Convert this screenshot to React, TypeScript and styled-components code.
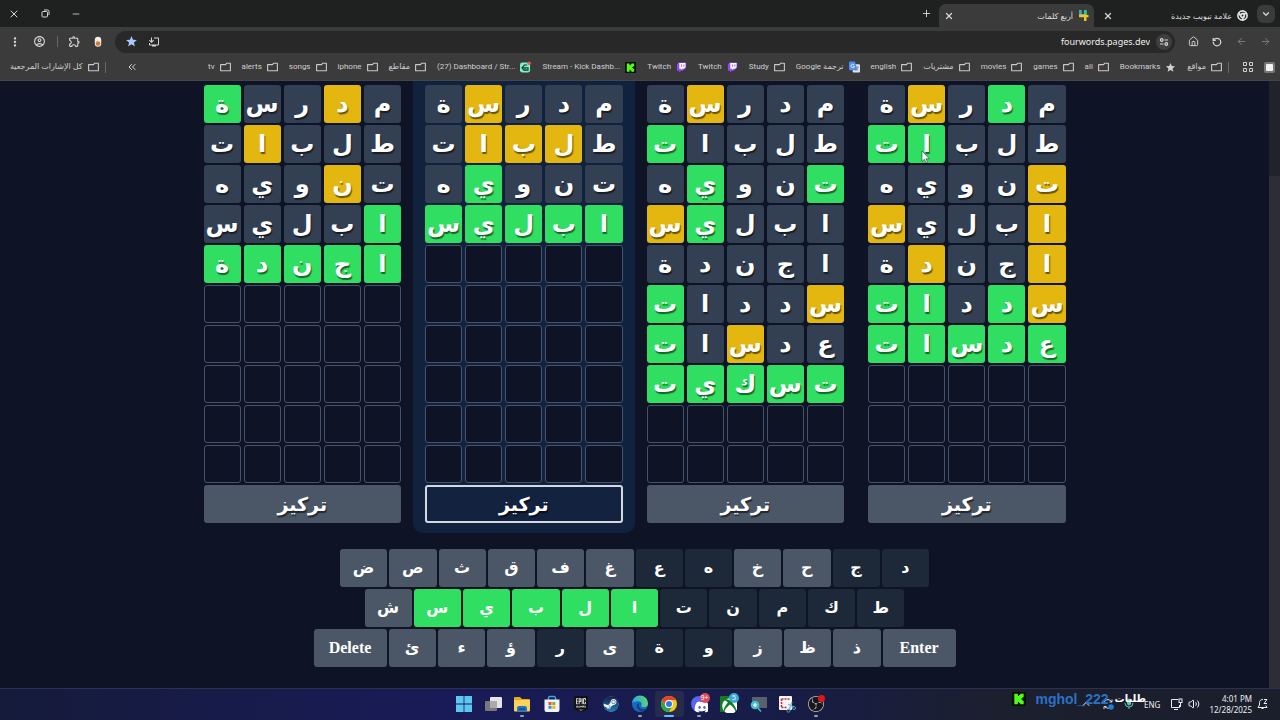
import React from 'react';
import styled, { createGlobalStyle } from 'styled-components';
import {
  ArrowLeft,
  ArrowRight,
  ChevronDown,
  ChevronsLeft,
  ChevronUp,
  House,
  Minus,
  Plus,
  RotateCcw,
  Volume2,
  X,
} from 'lucide-react';
import { FaDiscord, FaSteam, FaXbox } from 'react-icons/fa';
import {
  MdInstallDesktop,
  MdMoreVert,
  MdOutlineAccountCircle,
  MdOutlineExtension,
  MdStar,
} from 'react-icons/md';
import { SiEpicgames, SiObsstudio } from 'react-icons/si';

const UI_FONT = '"Noto Sans", "DejaVu Sans", sans-serif';
const SMALL_FONT = 'Roboto, "DejaVu Sans", sans-serif';
const GAME_FONT = '"DejaVu Sans", sans-serif';

const GlobalStyle = createGlobalStyle`
  *, *::before, *::after { box-sizing: border-box; }
  body {
    margin: 0;
    background: #0e1425;
    color: #fff;
    font-family: ${UI_FONT};
  }
  button, input { font: inherit; color: inherit; margin: 0; padding: 0; border: 0; background: none; }
  button { cursor: pointer; }
  a { color: inherit; text-decoration: none; }
  svg { display: block; flex: none; }
`;

const Screen = styled.div`
  display: flex;
  flex-direction: column;
  min-height: 100vh;
`;

/* ---------- browser window ---------- */

const Browser = styled.header`
  direction: rtl;
  background: #3b3b3b;
  border-bottom: 1px solid #42464a;
`;

const TabStrip = styled.div`
  display: flex;
  align-items: center;
  gap: 4px;
  height: 27px;
  padding: 0 5px;
  background: #1f2120;
  color: #dedede;
`;

const IconButton = styled.button<{ $size?: number; $bg?: string; $dim?: boolean }>`
  display: flex;
  align-items: center;
  justify-content: center;
  flex: none;
  width: ${(p) => p.$size ?? 18}px;
  height: 18px;
  border-radius: 6px;
  background: ${(p) => p.$bg ?? 'transparent'};
  color: ${(p) => (p.$dim ? '#808080' : '#d6d6d6')};
`;

const Tab = styled.div<{ $active?: boolean }>`
  display: flex;
  align-items: center;
  gap: 5px;
  flex: 0 1 155px;
  height: 23px;
  align-self: flex-end;
  padding: 0 5px;
  border-radius: 7px 7px 0 0;
  background: ${(p) => (p.$active ? '#3b3b3b' : 'transparent')};
`;

const TabTitle = styled.span`
  flex: 1;
  overflow: hidden;
  white-space: nowrap;
  font-size: 8px;
`;

const Spacer = styled.div`
  flex: 1;
`;

const WindowControls = styled.div`
  display: flex;
  gap: 13px;
`;

const Toolbar = styled.div`
  display: flex;
  align-items: center;
  gap: 6px;
  height: 29px;
  padding: 0 6px;
`;

const Omnibox = styled.div`
  display: flex;
  align-items: center;
  gap: 6px;
  flex: 1;
  height: 22px;
  margin-right: 3px;
  padding: 0 3px 0 7px;
  border-radius: 11px;
  background: #282828;
`;

const SiteInfo = styled.button`
  display: flex;
  align-items: center;
  justify-content: center;
  width: 16px;
  height: 16px;
  border-radius: 50%;
  background: #3f3f3f;
  color: #d6d6d6;
`;

const Address = styled.input`
  flex: 1;
  min-width: 0;
  height: 20px;
  direction: ltr;
  text-align: right;
  font-size: 9px;
  color: #f0f0f0;
  outline: none;
`;

const Mirrored = styled.span`
  transform: scaleX(-1);
`;

const Divider = styled.span`
  flex: none;
  width: 1px;
  height: 11px;
  margin: 0 3px;
  background: #66696b;
`;

const Bookmarks = styled.nav`
  display: flex;
  align-items: center;
  gap: 11px;
  height: 24px;
  padding: 0 5px 2px 10px;
  font-family: ${SMALL_FONT};
  font-size: 8px;
  color: #cfcfcf;
`;

const MarkGroup = styled.div`
  display: flex;
  align-items: center;
  gap: 3px;
`;

const Bookmark = styled.a`
  display: flex;
  align-items: center;
  gap: 5px;
  flex: none;
  line-height: 14px;
  white-space: nowrap;
`;

const FolderIcon = () => (
  <svg width="11" height="12" viewBox="0 0 11 12" fill="none" stroke="#c9c9c9" strokeWidth="1.1" aria-hidden="true">
    <path d="M.6 3.600h4.900l1.200-1.400h3.700v7.600H.6z" strokeLinejoin="round" />
  </svg>
);

const TwitchIcon = () => (
  <svg width="11" height="12" viewBox="0 0 12 12" aria-hidden="true">
    <path d="M2.600 1 1 3.200V10h2.400v2l2-2h2L11 6.800V1z" fill="#9146ff" />
    <path d="M3.600 1.600h6.800v4.800L8.800 8H7L5.400 9.400V8H3.600z" fill="#fff" />
    <path d="M6.200 3.200v2.400M8.600 3.200v2.400" stroke="#9146ff" />
  </svg>
);

const KickIcon = ({ size = 11 }: { size?: number }) => (
  <svg width={size} height={size} viewBox="0 0 12 12" aria-hidden="true">
    <path d="M0 0h12v12H0z" fill="#071107" />
    <path d="M2 1.500h3v2h1v-1h1v-1h3v3H9v1H8v1h1v1h1v3H7v-1H6v-1H5v2H2z" fill="#53fc18" />
  </svg>
);

const StreamIcon = () => (
  <svg width="11" height="12" viewBox="0 0 12 12" aria-hidden="true">
    <rect y="1" width="11" height="11" rx="2.500" fill="#7df0cb" />
    <path d="M2.300 6.800h6.400v2.600H4.200zM2.500 6.600l2.300-2.800h3" fill="none" stroke="#12372f" strokeWidth="1.300" />
    <path d="M4.500 8.100h2.500" stroke="#12372f" />
    <circle cx="10" cy="2" r="1.900" fill="#ef5360" />
  </svg>
);

const TranslateIcon = () => (
  <svg width="11" height="12" viewBox="0 0 12 12" aria-hidden="true">
    <rect x="4" y="3" width="8" height="9" rx="1" fill="#dfe4ea" />
    <path d="M6.500 6h4M8.500 5v1M10 6c-.5 2-1.500 3-3 3.800M7.500 7.500l2.500 2.300" stroke="#6e7b8c" strokeWidth=".8" fill="none" />
    <path d="M1 0h5.500L9 9.500H1a1 1 0 0 1-1-1V1a1 1 0 0 1 1-1z" fill="#4c8bf5" />
    <path d="M5.600 3.700A1.900 1.900 0 1 0 6 5.200H4.200" stroke="#fff" strokeWidth=".9" fill="none" />
  </svg>
);

const FourIcon = () => (
  <svg width="11" height="11" viewBox="0 0 11 11" aria-hidden="true">
    <path d="M1 0h2.500v4H6V0h2.500v5H1z" fill="#2fc98b" />
    <path d="M1 0h2.500v5H1z" fill="#3aa9c8" />
    <path d="M1 4.500h5V3h2.500v2H10.500v2.300H8.500V11H6V7.300H1z" fill="#f2c22c" />
    <path d="M6 0h2.500v4.500H6z" fill="#2fc98b" />
  </svg>
);

const ChromeMono = () => (
  <svg width="11" height="11" viewBox="0 0 12 12" fill="none" stroke="#e2e2e2" strokeWidth="1.800" aria-hidden="true">
    <circle cx="6" cy="6" r="5" />
    <circle cx="6" cy="6" r="2" />
    <path d="M6 4h4.800M4.300 7 1.800 3M7.700 7l-2.400 4" />
  </svg>
);

const TuneIcon = () => (
  <svg width="10" height="10" viewBox="0 0 10 10" fill="none" stroke="currentColor" strokeWidth="1.200" aria-hidden="true">
    <circle cx="2.700" cy="3" r="1.300" />
    <path d="M5.500 3H9M1 7h3.500" />
    <circle cx="7.300" cy="7" r="1.300" />
  </svg>
);

const RestoreIcon = () => (
  <svg width="9" height="9" viewBox="0 0 9 9" fill="none" stroke="currentColor" aria-hidden="true">
    <rect x="1" y="2.500" width="5.500" height="5.500" rx="1" />
    <path d="M3 1h3.500A1.500 1.500 0 0 1 8 2.500V6" />
  </svg>
);

const EggIcon = () => (
  <svg width="8" height="12" viewBox="0 0 8 12" aria-hidden="true">
    <rect x=".8" y=".8" width="6.400" height="10" rx="3.200" fill="#f3ede6" />
    <circle cx="4" cy="7.600" r="2.300" fill="#d9772f" />
  </svg>
);

const AppsIcon = () => (
  <svg width="10" height="10" viewBox="0 0 10 10" fill="none" stroke="#d0d0d0" aria-hidden="true">
    <path d="M.5.5h3v3h-3zM6.500.5h3v3h-3zM.5 6.500h3v3h-3zM6.500 6.500h3v3h-3z" />
  </svg>
);

const SquareIcon = () => (
  <svg width="11" height="11" viewBox="0 0 11 11" aria-hidden="true">
    <rect width="11" height="11" rx="2" fill="#777" />
    <rect x="2" y="2" width="7" height="7" rx="1" fill="#f2f2f2" />
  </svg>
);

type Mark = { label: string; icon?: 'twitch' | 'kick' | 'stream' | 'translate' | 'star' };

const MARKS: Mark[] = [
  { label: 'Bookmarks', icon: 'star' },
  { label: 'ali' },
  { label: 'games' },
  { label: 'movies' },
  { label: 'مشتريات' },
  { label: 'english' },
  { label: 'ترجمة Google', icon: 'translate' },
  { label: 'Study' },
  { label: 'Twitch', icon: 'twitch' },
  { label: 'Twitch', icon: 'twitch' },
  { label: 'Stream - Kick Dashb...', icon: 'kick' },
  { label: '(27) Dashboard / Str...', icon: 'stream' },
  { label: 'مقاطع' },
  { label: 'iphone' },
  { label: 'songs' },
  { label: 'alerts' },
  { label: 'tv' },
];

const MarkIcon = ({ kind }: { kind?: Mark['icon'] }) => {
  switch (kind) {
    case 'twitch':
      return <TwitchIcon />;
    case 'kick':
      return <KickIcon />;
    case 'stream':
      return <StreamIcon />;
    case 'translate':
      return <TranslateIcon />;
    case 'star':
      return <MdStar size={11} color="#d0d0d0" />;
    default:
      return <FolderIcon />;
  }
};

/* ---------- game ---------- */

const Viewport = styled.div`
  display: flex;
  flex: 1;
`;

const Scrollbar = styled.div`
  width: 11px;
  padding-top: 95px;
  background: #20232b;
`;

const Thumb = styled.div`
  height: 100%;
  background: #2c2d37;
`;

const Game = styled.main`
  flex: 1;
  min-width: 0;
  padding-bottom: 20px;
  font-family: ${GAME_FONT};
  font-weight: 700;
`;

const Boards = styled.div`
  display: grid;
  grid-template-columns: repeat(4, minmax(0, 1fr));
  max-width: 886px;
  margin: 0 auto;
`;

const Board = styled.section<{ $focused: boolean }>`
  display: grid;
  gap: 2px;
  padding: 4px 12px 10px;
  border-radius: 0 0 10px 10px;
  background: ${(p) => (p.$focused ? '#10223e' : 'transparent')};
`;

const Row = styled.div`
  display: grid;
  grid-template-columns: repeat(5, minmax(0, 1fr));
  gap: 3px;
  direction: rtl;
`;

const CELL_COLORS: Record<string, string> = { x: '#334053', g: '#30df61', y: '#e3b710', e: '#0e1425' };

const LETTER_SHADOW = '1px 2px 1px rgba(0, 0, 0, 0.55)';

const Cell = styled.div<{ $state: string }>`
  display: flex;
  align-items: center;
  justify-content: center;
  height: 38px;
  border: 1px solid ${(p) => (p.$state === 'e' ? '#465269' : 'transparent')};
  border-radius: 3px;
  background: ${(p) => CELL_COLORS[p.$state]};
  font-size: 24px;
  line-height: 32px;
  text-shadow: ${LETTER_SHADOW};
`;

const FocusButton = styled.button<{ $focused: boolean }>`
  height: 38px;
  border-radius: 3px;
  border: 2px solid ${(p) => (p.$focused ? '#d3d8e4' : '#4b5767')};
  background: ${(p) => (p.$focused ? '#12223f' : '#4b5767')};
  font-size: 19px;
  line-height: 28px;
  text-shadow: ${LETTER_SHADOW};
`;

const Keyboard = styled.div`
  display: grid;
  gap: 2px;
  justify-items: center;
  margin-top: 16px;
`;

const KeyRow = styled.div<{ $max: number }>`
  display: flex;
  gap: 2px;
  width: 100%;
  max-width: ${(p) => p.$max}px;
`;

const KEY_COLORS: Record<string, string> = { n: '#4b5767', g: '#30df61', d: '#1d2938' };

const Key = styled.button<{ $state: string; $wide?: boolean }>`
  flex: ${(p) => (p.$wide ? '0 0 73px' : '1 1 0')};
  min-width: 0;
  height: 38px;
  border-radius: 3px;
  background: ${(p) => KEY_COLORS[p.$state]};
  font-family: ${(p) => (p.$wide ? '"Liberation Serif", serif' : GAME_FONT)};
  font-size: 16px;
  font-weight: 700;
  line-height: 20px;
`;

const BOARDS = [
  {
    words: ['مدرسة', 'طلبات', 'تنويه', 'ابليس', 'اجندة'],
    marks: ['xyxxg', 'xxxyx', 'xyxxx', 'gxxxx', 'ggggg'],
  },
  {
    words: ['مدرسة', 'طلبات', 'تنويه', 'ابليس'],
    marks: ['xxxyx', 'xyyyx', 'xxxgx', 'ggggg'],
    focused: true,
  },
  {
    words: ['مدرسة', 'طلبات', 'تنويه', 'ابليس', 'اجندة', 'سددات', 'عدسات', 'تسكيت'],
    marks: ['xxxyx', 'xxxxg', 'gxxgx', 'xxxgy', 'xxxxx', 'yxxxg', 'xxyxg', 'ggggg'],
  },
  {
    words: ['مدرسة', 'طلبات', 'تنويه', 'ابليس', 'اجندة', 'سددات', 'عدسات'],
    marks: ['xgxyx', 'xxxgg', 'yxxxx', 'yxxxy', 'yxxyx', 'ygxgg', 'ggggg'],
  },
];

const ROW_COUNT = 10;

const KEY_ROWS = [
  { max: 589, keys: ['ض', 'ص', 'ث', 'ق', 'ف', 'غ', 'ع', 'ه', 'خ', 'ح', 'ج', 'د'], states: 'nnnnnnddnndd' },
  { max: 540, keys: ['ش', 'س', 'ي', 'ب', 'ل', 'ا', 'ت', 'ن', 'م', 'ك', 'ط'], states: 'ngggggddddd' },
  { max: 642, keys: ['Delete', 'ئ', 'ء', 'ؤ', 'ر', 'ى', 'ة', 'و', 'ز', 'ظ', 'ذ', 'Enter'], states: 'nnnndnddnnnn' },
];

const Pointer = styled.svg`
  position: absolute;
  left: 921px;
  top: 151px;
`;

/* ---------- taskbar ---------- */

const Taskbar = styled.footer`
  position: relative;
  display: grid;
  grid-template-columns: 1fr minmax(0, 382px) 1fr;
  align-items: center;
  height: 32px;
  padding-bottom: 1px;
  border-top: 1px solid #2b3150;
  background: linear-gradient(90deg, #151b3a 0%, #191b58 35%, #171c48 60%, #1b1f2e 78%, #1b1e2b 100%);
`;

const Apps = styled.div`
  grid-column: 2;
  display: flex;
`;

const AppButton = styled.button<{ $active?: boolean }>`
  position: relative;
  display: flex;
  flex: 1;
  align-items: center;
  justify-content: center;
  height: 26px;
  border-radius: 3px;
  background: ${(p) => (p.$active ? '#262a4c' : 'transparent')};
`;

const Running = styled.span<{ $active?: boolean }>`
  position: absolute;
  bottom: 0;
  width: ${(p) => (p.$active ? 10 : 4)}px;
  height: 2px;
  border-radius: 1px;
  background: ${(p) => (p.$active ? '#62c4ef' : '#9aa0b8')};
`;

const Badge = styled.span<{ $bg: string }>`
  position: absolute;
  top: 2px;
  right: 4px;
  min-width: 10px;
  height: 10px;
  border-radius: 5px;
  background: ${(p) => p.$bg};
  color: #fff;
  font-size: 7px;
  line-height: 10px;
  text-align: center;
`;

const Tray = styled.div`
  display: flex;
  align-items: center;
  justify-content: flex-end;
  gap: 5px;
  padding-right: 12px;
  font-size: 8px;
  color: #eceef2;
`;

const TrayGroup = styled.div`
  display: flex;
  align-items: center;
  gap: 10px;
  margin-right: 5px;
`;

const Clock = styled.time`
  margin-left: 4px;
  text-align: right;
  line-height: 11px;
`;

const StreamTag = styled.div`
  position: absolute;
  top: 1px;
  right: 134px;
  display: flex;
  align-items: center;
  gap: 6px;
  font-family: "Liberation Sans", "DejaVu Sans", sans-serif;
  font-size: 14px;
  font-weight: 700;
  line-height: 18px;
  white-space: nowrap;
`;

const TagName = styled.span`
  margin-left: 3px;
  color: #2a71c6;
`;

const TagText = styled.span`
  font-size: 10px;
  line-height: 12px;
`;

const WindowsLogo = () => (
  <svg width="18" height="18" viewBox="0 0 18 18" aria-hidden="true">
    <path d="M1 1h7.600v7.600H1zM9.400 1H17v7.600H9.400zM1 9.400h7.600V17H1zM9.400 9.400H17V17H9.400z" fill="#5cc8f2" />
  </svg>
);

const TaskViewIcon = () => (
  <svg width="18" height="18" viewBox="0 0 18 18" aria-hidden="true">
    <rect x="6" y="2" width="12" height="11" rx="1" fill="#e4e4e6" />
    <rect x="1" y="6" width="12" height="10" rx="1" fill="#77777c" />
    <path d="M6 6h7v7H6z" fill="#aaaaae" />
  </svg>
);

const ExplorerIcon = () => (
  <svg width="18" height="18" viewBox="0 0 18 18" aria-hidden="true">
    <path d="M1 3a1 1 0 0 1 1-1h5l2 2h7a1 1 0 0 1 1 1v3H1z" fill="#e8a81c" />
    <rect x="1" y="5" width="16" height="11.500" rx="1" fill="#fbd25a" />
    <path d="M4 16.500V13a2 2 0 0 1 2-2h6a2 2 0 0 1 2 2v3.500z" fill="#1f76c8" />
    <path d="M6 14h6" stroke="#0d4f91" strokeWidth="1.500" />
  </svg>
);

const StoreIcon = () => (
  <svg width="18" height="18" viewBox="0 0 18 18" aria-hidden="true">
    <path d="M5.500 5V3a1.500 1.500 0 0 1 1.500-1.500h4A1.500 1.500 0 0 1 12.500 3v2" fill="none" stroke="#3ba7e5" strokeWidth="1.400" />
    <path d="M1.500 4.500h15V15a2 2 0 0 1-2 2h-11a2 2 0 0 1-2-2z" fill="#f2f2f4" />
    <path d="M5.500 7h3v3h-3z" fill="#ea4a2f" />
    <path d="M9.300 7h3v3h-3z" fill="#74b62e" />
    <path d="M5.500 10.800h3v3h-3z" fill="#1f94dd" />
    <path d="M9.300 10.800h3v3h-3z" fill="#f5b50c" />
  </svg>
);

const EdgeIcon = () => (
  <svg width="18" height="18" viewBox="0 0 18 18" aria-hidden="true">
    <defs>
      <linearGradient id="edgeTop" x1="0" x2="1">
        <stop offset="0" stopColor="#2aa5e8" />
        <stop offset="1" stopColor="#5bd66b" />
      </linearGradient>
    </defs>
    <circle cx="9" cy="9" r="8" fill="#1669c0" />
    <path d="M1 8.500A8 8 0 0 1 17 8.500c0 2.500-2 3.700-4 3.700s-3-1-2.600-2c1-2-.8-4-3.400-4C4 6.200 1.800 7 1 8.500z" fill="url(#edgeTop)" />
    <path d="M6.500 8.500c-2 3 0 7 4.500 8.200 2-.5 3.800-1.800 4.800-3.200-4 1.800-8 .5-8-3 0-1 .2-1.500.7-2z" fill="#123f86" />
  </svg>
);

const ChromeIcon = () => (
  <svg width="18" height="18" viewBox="0 0 18 18" aria-hidden="true">
    <circle cx="9" cy="9" r="8" fill="#f9c713" />
    <path d="M2.070 5A8 8 0 0 1 15.930 5H9a4 4 0 0 0-3.460 6z" fill="#e8402f" />
    <path d="M2.070 5A8 8 0 0 0 9 17l3.460-6a4 4 0 0 1-6.920 0z" fill="#2ea44f" />
    <circle cx="9" cy="9" r="4" fill="#fff" />
    <circle cx="9" cy="9" r="3" fill="#2d78ea" />
  </svg>
);

const EpicIcon = () => (
  <svg width="18" height="18" viewBox="0 0 18 18" aria-hidden="true">
    <path d="M3 2h12v11l-6 3-6-3z" fill="#e8e8e8" />
    <SiEpicgames x={1} y={1} width={16} height={16} color="#111" />
  </svg>
);

const SteamIcon = () => (
  <svg width="18" height="18" viewBox="0 0 18 18" aria-hidden="true">
    <defs>
      <linearGradient id="steamDisc" x1="0" x2="0" y1="0" y2="1">
        <stop offset="0" stopColor="#171d45" />
        <stop offset="1" stopColor="#1f7fb8" />
      </linearGradient>
    </defs>
    <circle cx="9" cy="9" r="7.500" fill="#f0f3f7" />
    <FaSteam x={1} y={1} width={16} height={16} fill="url(#steamDisc)" />
  </svg>
);

const DiscordIcon = () => (
  <svg width="18" height="18" viewBox="0 0 18 18" aria-hidden="true">
    <circle cx="9" cy="9" r="8" fill="#5865f2" />
    <FaDiscord x={4} y={4} width={10} height={10} color="#fff" />
  </svg>
);

const XboxIcon = () => (
  <svg width="18" height="18" viewBox="0 0 18 18" aria-hidden="true">
    <rect x="1" y="1" width="16" height="16" rx="1" fill="#127c22" />
    <FaXbox x={3} y={3} width={12} height={12} color="#fff" />
  </svg>
);

const MagnifierIcon = () => (
  <svg width="18" height="18" viewBox="0 0 18 18" aria-hidden="true">
    <rect x="3" y="2" width="15" height="11" fill="#59616c" />
    <circle cx="6" cy="10" r="4.300" fill="#43c0cc" />
    <path d="M4 10h4M6 8v4" stroke="#fff" strokeWidth="1.200" />
    <path d="m9 13 3 3.500" stroke="#43c0cc" strokeWidth="1.500" />
  </svg>
);

const SnipIcon = () => (
  <svg width="18" height="18" viewBox="0 0 18 18" aria-hidden="true">
    <rect x="1" y="1" width="13" height="14" rx="1" fill="#f5f5f6" />
    <path d="M3.500 4h8M3.500 4v8.500M3.500 12.500H9" stroke="#c8283a" strokeWidth="1.600" strokeDasharray="2 1" fill="none" />
    <path d="m10 9 5.500 3M14 7l-3 8" stroke="#7fb4d0" strokeWidth="1.200" />
    <circle cx="16" cy="13" r="1.500" fill="none" stroke="#4da0c8" />
    <circle cx="10.500" cy="15.700" r="1.500" fill="none" stroke="#4da0c8" />
  </svg>
);

const ObsIcon = () => (
  <svg width="18" height="18" viewBox="0 0 18 18" aria-hidden="true">
    <circle cx="9" cy="9" r="8" fill="#17171b" />
    <SiObsstudio x={1} y={1} width={16} height={16} color="#c3c3c8" />
    <circle cx="14.500" cy="3.500" r="3.500" fill="#e11616" />
  </svg>
);

const APPS: { name: string; Icon: React.FC; running?: boolean; active?: boolean; badge?: [string, string] }[] = [
  { name: 'Start', Icon: WindowsLogo },
  { name: 'Task view', Icon: TaskViewIcon },
  { name: 'File Explorer', Icon: ExplorerIcon, running: true },
  { name: 'Store', Icon: StoreIcon },
  { name: 'Epic Games', Icon: EpicIcon },
  { name: 'Steam', Icon: SteamIcon },
  { name: 'Edge', Icon: EdgeIcon, running: true },
  { name: 'Chrome', Icon: ChromeIcon, running: true, active: true },
  { name: 'Discord', Icon: DiscordIcon, running: true, badge: ['9+', '#dc4b5c'] },
  { name: 'Xbox', Icon: XboxIcon, badge: ['5', '#3aa9dc'] },
  { name: 'Magnifier', Icon: MagnifierIcon },
  { name: 'Snipping Tool', Icon: SnipIcon },
  { name: 'OBS', Icon: ObsIcon, running: true },
];

const SyncIcon = () => (
  <svg width="12" height="12" viewBox="0 0 12 12" fill="none" stroke="#d6dae2" aria-hidden="true">
    <path d="M2 5a4 4 0 0 1 7-2l1 1M10 1.500V4H7.500M9 8.500a4 4 0 0 1-6.500 0M2 11V8.500h2.500" />
    <circle cx="9" cy="9" r="2.800" fill="#1c7fe0" stroke="none" />
  </svg>
);

const MicIcon = () => (
  <svg width="10" height="12" viewBox="0 0 10 12" fill="none" stroke="#5fc6a8" aria-hidden="true">
    <path d="M1 5a4 4 0 0 0 8 0M5 9v2" />
    <rect x="3.500" y="1" width="3" height="6" rx="1.500" fill="#5fc6a8" />
  </svg>
);

const NetworkIcon = () => (
  <svg width="13" height="12" viewBox="0 0 13 12" fill="none" stroke="currentColor" aria-hidden="true">
    <path d="M8 1.500H1.500v8h8V7M4 11.500h4" />
    <rect x="9" y="1" width="3" height="3.500" />
    <path d="M10.500 4.500V9" />
  </svg>
);

const BellIcon = () => (
  <svg width="11" height="12" viewBox="0 0 11 12" fill="none" stroke="currentColor" aria-hidden="true">
    <path d="M6 1.500A3 3 0 0 0 2.500 4.500V7L1 9.500h9L8.800 7.500M4.500 10.500h2M7 1.500h3L7 5.500h3" />
  </svg>
);

export default function App() {
  return (
    <Screen>
      <GlobalStyle />
      <Browser>
        <TabStrip>
          <IconButton aria-label="Search tabs" $bg="#3b3b3b">
            <ChevronDown size={10} strokeWidth={3} />
          </IconButton>
          <Tab>
            <ChromeMono />
            <TabTitle>علامة تبويب جديدة</TabTitle>
            <IconButton aria-label="Close tab" $size={10}>
              <X size={10} strokeWidth={3} />
            </IconButton>
          </Tab>
          <Tab $active>
            <FourIcon />
            <TabTitle>أربع كلمات</TabTitle>
            <IconButton aria-label="Close tab" $size={10}>
              <X size={10} strokeWidth={3} />
            </IconButton>
          </Tab>
          <IconButton aria-label="New tab">
            <Plus size={11} />
          </IconButton>
          <Spacer />
          <WindowControls>
            <IconButton aria-label="Minimize">
              <Minus size={10} />
            </IconButton>
            <IconButton aria-label="Restore">
              <RestoreIcon />
            </IconButton>
            <IconButton aria-label="Close">
              <X size={12} />
            </IconButton>
          </WindowControls>
        </TabStrip>
        <Toolbar>
          <IconButton aria-label="Forward" $dim>
            <ArrowRight size={11} />
          </IconButton>
          <IconButton aria-label="Back" $dim>
            <ArrowLeft size={11} />
          </IconButton>
          <IconButton aria-label="Reload">
            <RotateCcw size={10} strokeWidth={3} />
          </IconButton>
          <IconButton aria-label="Home">
            <House size={11} />
          </IconButton>
          <Omnibox>
            <SiteInfo aria-label="Site information">
              <TuneIcon />
            </SiteInfo>
            <Address aria-label="Address" defaultValue="fourwords.pages.dev" />
            <IconButton aria-label="Install" $size={16}>
              <Mirrored>
                <MdInstallDesktop size={12} />
              </Mirrored>
            </IconButton>
            <IconButton aria-label="Bookmarked">
              <MdStar size={13} color="#a8c7fa" />
            </IconButton>
          </Omnibox>
          <IconButton aria-label="Extension" $size={22}>
            <EggIcon />
          </IconButton>
          <IconButton aria-label="Extensions" $size={14}>
            <MdOutlineExtension size={13} />
          </IconButton>
          <Divider />
          <IconButton aria-label="Profile">
            <MdOutlineAccountCircle size={13} />
          </IconButton>
          <IconButton aria-label="Menu">
            <MdMoreVert size={14} />
          </IconButton>
        </Toolbar>
        <Bookmarks aria-label="Bookmarks">
          <SquareIcon />
          <AppsIcon />
          <MarkGroup>
            <Divider />
            <Bookmark href="#">
              <FolderIcon />
              مواقع
            </Bookmark>
          </MarkGroup>
          {MARKS.map((m, i) => (
            <Bookmark href="#" key={i}>
              <MarkIcon kind={m.icon} />
              <bdi>{m.label}</bdi>
            </Bookmark>
          ))}
          <Spacer />
          <IconButton aria-label="More bookmarks" $size={24}>
            <ChevronsLeft size={12} />
          </IconButton>
          <MarkGroup>
            <Divider />
            <Bookmark href="#">
              <FolderIcon />
              كل الإشارات المرجعية
            </Bookmark>
          </MarkGroup>
        </Bookmarks>
      </Browser>

      <Viewport>
        <Game>
          <Boards>
            {BOARDS.map((board, b) => (
              <Board key={b} $focused={!!board.focused}>
                {Array.from({ length: ROW_COUNT }, (_, r) => (
                  <Row key={r}>
                    {Array.from({ length: 5 }, (_, c) => (
                      <Cell key={c} $state={board.marks[r]?.[c] ?? 'e'}>
                        {board.words[r]?.[c]}
                      </Cell>
                    ))}
                  </Row>
                ))}
                <FocusButton $focused={!!board.focused}>تركيز</FocusButton>
              </Board>
            ))}
          </Boards>
          <Keyboard>
            {KEY_ROWS.map((row, r) => (
              <KeyRow key={r} $max={row.max}>
                {row.keys.map((k, i) => (
                  <Key key={k} $state={row.states[i]} $wide={k.length > 1}>
                    {k}
                  </Key>
                ))}
              </KeyRow>
            ))}
          </Keyboard>
        </Game>
        <Scrollbar>
          <Thumb />
        </Scrollbar>
      </Viewport>

      <Taskbar>
        <Apps>
          {APPS.map(({ name, Icon, running, active, badge }) => (
            <AppButton key={name} aria-label={name} $active={active}>
              <Icon />
              {running && <Running $active={active} />}
              {badge && <Badge $bg={badge[1]}>{badge[0]}</Badge>}
            </AppButton>
          ))}
        </Apps>
        <Tray>
          <TrayGroup>
            <ChevronUp size={12} />
            <SyncIcon />
            <MicIcon />
            <span>ENG</span>
          </TrayGroup>
          <NetworkIcon />
          <Volume2 size={12} />
          <Clock>
            4:01 PM
            <br />
            12/28/2025
          </Clock>
          <BellIcon />
        </Tray>
        <StreamTag>
          <KickIcon size={14} />
          <TagName>mghol_222</TagName>
          <TagText>طلبات</TagText>
        </StreamTag>
      </Taskbar>
      <Pointer width="9" height="13" viewBox="0 0 9 13" aria-hidden="true">
        <path d="M1 0v10.500l2.400-2.300L5 12l1.600-.7L5 7.800h3.400z" fill="#fff" stroke="#333" strokeWidth=".6" />
      </Pointer>
    </Screen>
  );
}
